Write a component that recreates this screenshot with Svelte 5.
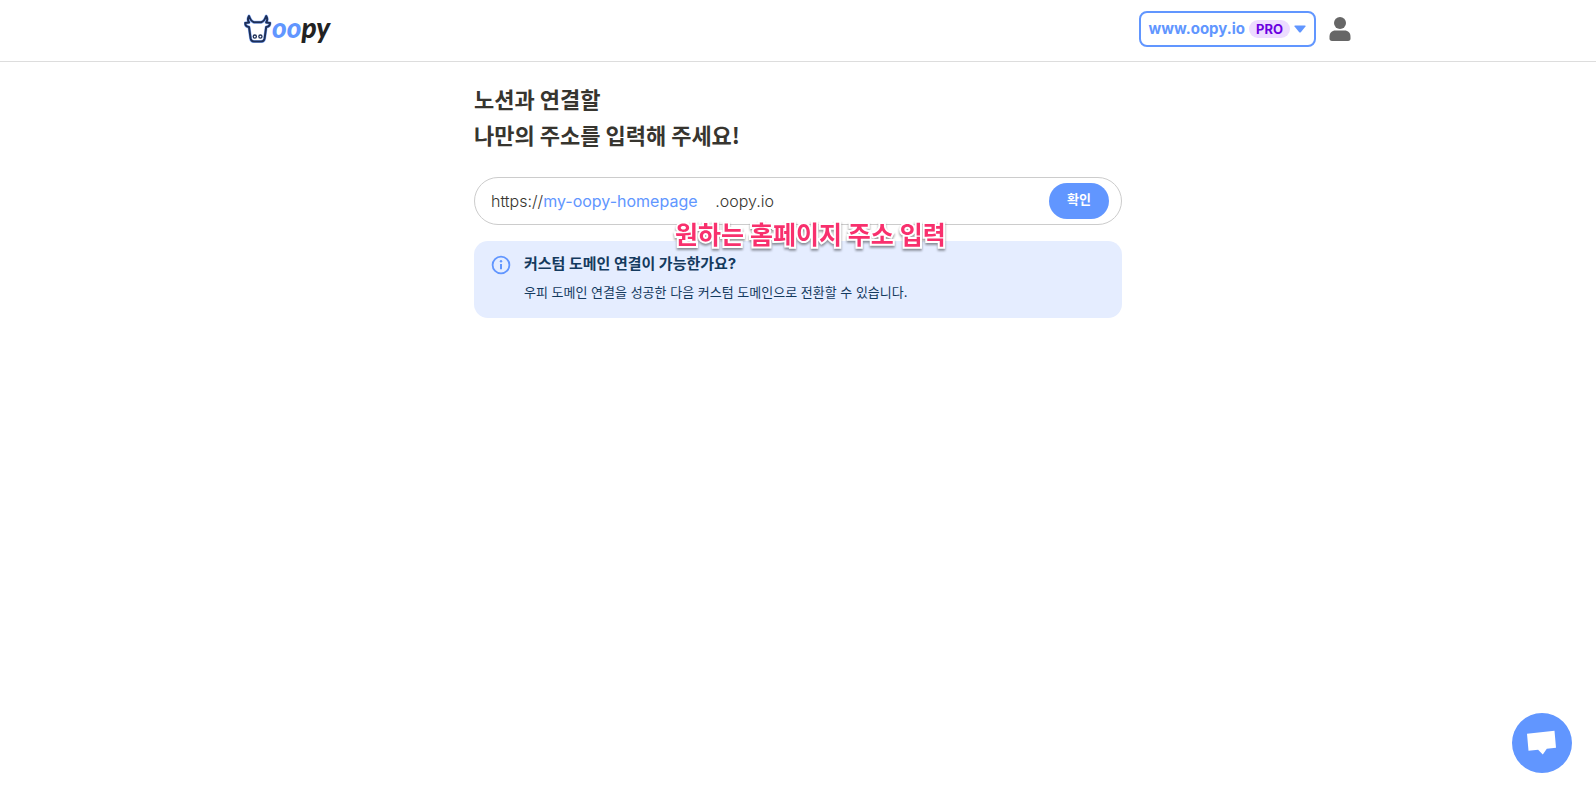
<script>
  let site = 'www.oopy.io';
  let plan = 'PRO';
  let subdomain = '';
</script>

<header>
  <div class="bar">
    <a class="logo" href="/" aria-label="oopy">
      <svg width="28" height="30" viewBox="0 0 28 30" fill="none" aria-hidden="true">
        <path
          d="M5 2C3.6 4.2 3.8 6.6 5 8.4L1.2 9C1.2 11.2 2.8 12.8 5 13L6.6 24.4C7 26.6 8 27.6 10 27.6H17.2C19.2 27.6 20.2 26.6 20.6 24.4L22.2 13C24.4 12.8 26 11.2 26 9L22.2 8.4C23.4 6.6 23.6 4.2 22.2 2C21.2 4.8 19.8 7.6 17.2 8.2H10C7.4 7.6 6 4.8 5 2Z"
          stroke="#8fb4ff"
          stroke-width="3"
          stroke-linejoin="round"
        />
        <path
          d="M5 2C3.6 4.2 3.8 6.6 5 8.4L1.2 9C1.2 11.2 2.8 12.8 5 13L6.6 24.4C7 26.6 8 27.6 10 27.6H17.2C19.2 27.6 20.2 26.6 20.6 24.4L22.2 13C24.4 12.8 26 11.2 26 9L22.2 8.4C23.4 6.6 23.6 4.2 22.2 2C21.2 4.8 19.8 7.6 17.2 8.2H10C7.4 7.6 6 4.8 5 2Z"
          stroke="#1d2f57"
          stroke-width="2"
          stroke-linejoin="round"
        />
        <circle cx="10.8" cy="22.6" r="1.6" stroke="#1d2f57" stroke-width="1.3" />
        <circle cx="16.4" cy="22.6" r="1.6" stroke="#1d2f57" stroke-width="1.3" />
      </svg>
      <span class="wordmark"><span class="blue">oo</span>py</span>
    </a>
    <div class="account">
      <button class="site" type="button">
        <span>{site}</span>
        <span class="plan">{plan}</span>
        <svg width="12" height="8" viewBox="0 0 12 8" aria-hidden="true">
          <path d="M1 .5H11Q12.3 .5 11.5 1.6L6.8 7.2Q6 8 5.2 7.2L.5 1.6Q-.3 .5 1 .5Z" fill="#6196ff" />
        </svg>
      </button>
      <button class="profile" type="button" aria-label="프로필">
        <svg width="22" height="26" viewBox="0 0 22 26" fill="#666" aria-hidden="true">
          <circle cx="11" cy="7" r="6" />
          <path d="M6.5 14.5H15.5C19.2 14.5 21.5 17 21.5 20.4V22.6C21.5 24.2 20.7 25 19 25H3C1.3 25 .5 24.2 .5 22.6V20.4C.5 17 2.8 14.5 6.5 14.5Z" />
        </svg>
      </button>
    </div>
  </div>
</header>

<main>
  <h1>노션과 연결할<br />나만의 주소를 입력해 주세요!</h1>

  <form on:submit|preventDefault>
    <label for="subdomain">https://</label>
    <input id="subdomain" type="text" placeholder="my-oopy-homepage" bind:value={subdomain} />
    <span class="suffix">.oopy.io</span>
    <button class="submit" type="submit">확인</button>
    <strong class="callout">원하는 홈페이지 주소 입력</strong>
  </form>

  <section class="info">
    <svg width="20" height="20" viewBox="0 0 20 20" fill="none" aria-hidden="true">
      <circle cx="10" cy="10" r="8.4" stroke="#6196ff" stroke-width="1.8" />
      <circle cx="10" cy="6.2" r="1.2" fill="#6196ff" />
      <path d="M10 9V14.2" stroke="#6196ff" stroke-width="2" />
    </svg>
    <div>
      <h2>커스텀 도메인 연결이 가능한가요?</h2>
      <p>우피 도메인 연결을 성공한 다음 커스텀 도메인으로 전환할 수 있습니다.</p>
    </div>
  </section>
</main>

<button class="chat" type="button" aria-label="채팅 상담">
  <svg width="30" height="26" viewBox="0 0 30 26" aria-hidden="true">
    <path d="M0 3.8L27.5 .8L29 17.8L19.8 18.8L15.8 24.6L11.1 19.8L1.5 20.8Z" fill="#fff" />
  </svg>
</button>

<style>
  :global(body) {
    background: #fff;
    color: #37352f;
    font-family: Inter, "Noto Sans CJK KR", sans-serif;
  }

  button,
  input {
    font: inherit;
    border: 0;
    padding: 0;
    background: none;
  }

  button {
    cursor: pointer;
  }

  svg {
    display: block;
    flex: none;
  }

  header {
    border-bottom: 1px solid #ddd;
  }

  .bar {
    display: flex;
    align-items: center;
    justify-content: space-between;
    box-sizing: border-box;
    max-width: 1108px;
    height: 61px;
    margin: 0 auto;
    padding: 0 1px 4px 0;
  }

  .logo {
    display: flex;
    align-items: center;
    text-decoration: none;
  }

  .wordmark {
    padding-bottom: 3px;
    color: #222;
    font-family: Lato, sans-serif;
    font-size: 28px;
    font-style: italic;
    font-weight: 900;
    line-height: 27px;
  }

  .wordmark .blue {
    color: #6196ff;
  }

  .account {
    display: flex;
    align-items: center;
    gap: 13px;
  }

  .site {
    display: flex;
    align-items: center;
    gap: 4px;
    box-sizing: border-box;
    height: 36px;
    padding: 0 8px;
    border: 2px solid #6196ff;
    border-radius: 8px;
    color: #6196ff;
    font-size: 15px;
    font-weight: 700;
  }

  .plan {
    padding: 0 7px;
    border-radius: 9px;
    background: #eddcff;
    color: #6a00e0;
    font-size: 13px;
    font-weight: 700;
    line-height: 18px;
  }

  main {
    max-width: 648px;
    margin: 0 auto;
    padding-top: 18px;
  }

  h1 {
    margin: 0 0 25px;
    font-family: "Noto Sans CJK KR", sans-serif;
    font-size: 22px;
    font-weight: 700;
    line-height: 36px;
  }

  form {
    position: relative;
    display: flex;
    align-items: center;
    box-sizing: border-box;
    height: 48px;
    padding: 0 12px 0 16px;
    border: 1px solid #ccc;
    border-radius: 24px;
    font-size: 16px;
    font-weight: 300;
    line-height: 20px;
  }

  input {
    width: 172px;
    outline: 0;
    color: #6196ff;
    font-weight: 400;
  }

  input::placeholder {
    color: #6196ff;
    opacity: 1;
  }

  .submit {
    width: 60px;
    height: 36px;
    margin-left: auto;
    padding-bottom: 4px;
    border-radius: 18px;
    background: #6196ff;
    color: #fff;
    font-size: 13px;
    font-weight: 700;
  }

  .callout {
    position: absolute;
    top: 41px;
    left: 200px;
    color: #f8306d;
    font-size: 25px;
    font-weight: 700;
    line-height: 32px;
    white-space: nowrap;
    -webkit-text-stroke: 4px #fff;
    paint-order: stroke fill;
    filter: drop-shadow(0 2px 1px rgba(0, 0, 0, 0.4));
    pointer-events: none;
  }

  .info {
    display: flex;
    gap: 13px;
    margin-top: 16px;
    padding: 11px 17px 14px;
    border-radius: 14px;
    background: #e5edff;
    color: #143a5e;
  }

  .info svg {
    margin-top: 3px;
  }

  h2 {
    margin: 0;
    font-size: 15px;
    font-weight: 700;
    line-height: 24px;
  }

  p {
    margin: 4px 0 0;
    font-size: 13px;
    line-height: 24px;
  }

  .chat {
    position: fixed;
    right: 24px;
    bottom: 20px;
    display: flex;
    align-items: center;
    justify-content: center;
    width: 60px;
    height: 60px;
    border-radius: 50%;
    background: #6196ff;
  }
</style>
